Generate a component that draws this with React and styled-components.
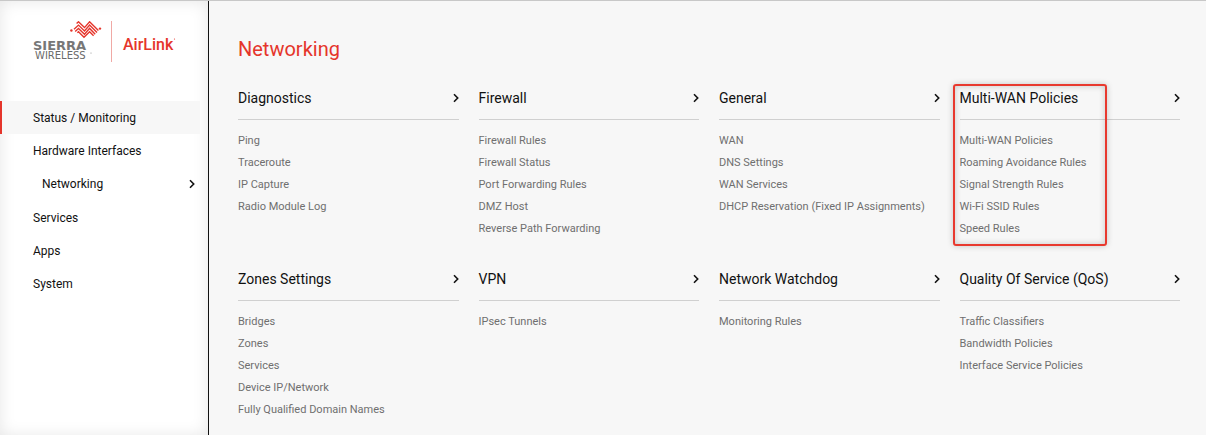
import React from 'react';
import styled, { createGlobalStyle } from 'styled-components';

const navItems = [
    { label: 'Status / Monitoring', active: true },
    { label: 'Hardware Interfaces' },
    { label: 'Networking', child: true },
    { label: 'Services' },
    { label: 'Apps' },
    { label: 'System' },
];

const sections = [
    { title: 'Diagnostics', links: ['Ping', 'Traceroute', 'IP Capture', 'Radio Module Log'] },
    {
        title: 'Firewall',
        links: ['Firewall Rules', 'Firewall Status', 'Port Forwarding Rules', 'DMZ Host', 'Reverse Path Forwarding'],
    },
    { title: 'General', links: ['WAN', 'DNS Settings', 'WAN Services', 'DHCP Reservation (Fixed IP Assignments)'] },
    {
        title: 'Multi-WAN Policies',
        links: ['Multi-WAN Policies', 'Roaming Avoidance Rules', 'Signal Strength Rules', 'Wi-Fi SSID Rules', 'Speed Rules'],
        highlighted: true,
    },
    { title: 'Zones Settings', links: ['Bridges', 'Zones', 'Services', 'Device IP/Network', 'Fully Qualified Domain Names'] },
    { title: 'VPN', links: ['IPsec Tunnels'] },
    { title: 'Network Watchdog', links: ['Monitoring Rules'] },
    { title: 'Quality Of Service (QoS)', links: ['Traffic Classifiers', 'Bandwidth Policies', 'Interface Service Policies'] },
];

const Chevron = ({ size = 10 }) => (
    <svg width={size * 0.6} height={size} viewBox="0 0 6 10" fill="none" stroke="#111" strokeWidth="1.6" aria-hidden="true">
        <path d="M1 1.3 L4.7 5 L1 8.7" />
    </svg>
);

const Logo = () => (
    <svg width="144" height="42" viewBox="0 0 144 42" role="img" aria-label="Sierra Wireless AirLink">
        <g fill="none" stroke="#e5352b" strokeWidth="1.4">
            <path d="M43.6 2.6 L45.5 0.8 L51.5 6.6 L56.6 0.8 L65.4 9.6" />
            <path d="M41 8.2 L45.5 4.1 L51.5 9.9 L56.6 4.1 L64 11.5" />
            <path d="M42.2 10.4 L45.5 7.4 L51.5 13.2 L56.6 7.4 L62.2 13.2" />
            <path d="M44.4 11.8 L45.5 10.7 L51 16.2 L56.6 10.7 L60.6 14.7" />
        </g>
        <g fill="#e5352b">
            <circle cx="38.4" cy="9.5" r="1.2" />
            <circle cx="67" cy="7.6" r="1.2" />
        </g>
        <text x="0" y="29" fontFamily="DejaVu Sans" fontWeight="700" fontSize="13" fill="#777">SIERRA</text>
        <text x="2" y="38" fontFamily="DejaVu Sans" fontSize="10" fill="#6a6a6a">WIRELESS</text>
        <circle cx="58" cy="32" r="0.5" fill="#777" />
        <path d="M78.5 0 V41" stroke="#f0a9a5" />
        <text x="90" y="29" fontFamily="Roboto" fontWeight="500" fontSize="16" fill="#e5352b">AirLink</text>
        <circle cx="141.5" cy="18" r="0.6" fill="#e5352b" />
    </svg>
);

export default function App() {
    return (
        <>
            <GlobalStyle />
            <Page>
                <Sidebar>
                    <LogoLink href="#home">
                        <Logo />
                    </LogoLink>
                    <nav>
                        {navItems.map((item) => (
                            <NavItem key={item.label} href="#nav" $active={item.active} $child={item.child}>
                                {item.label}
                                {item.child && <Chevron />}
                            </NavItem>
                        ))}
                    </nav>
                </Sidebar>
                <Main>
                    <Title>Networking</Title>
                    <Grid>
                        {sections.map((section) => (
                            <Section key={section.title}>
                                <SectionHeading>
                                    <SectionLink href="#section">
                                        {section.title}
                                        <Chevron />
                                    </SectionLink>
                                </SectionHeading>
                                <LinkList>
                                    {section.links.map((link) => (
                                        <li key={link}>
                                            <ItemLink href="#item">{link}</ItemLink>
                                        </li>
                                    ))}
                                </LinkList>
                                {section.highlighted && <Highlight />}
                            </Section>
                        ))}
                    </Grid>
                </Main>
            </Page>
        </>
    );
}

const GlobalStyle = createGlobalStyle`
    *{
        box-sizing: border-box;
    }
    body{
        margin: 0;
        background: #f7f7f7;
        font-family: Roboto, sans-serif;
        color: #111;
    }
    a{
        color: inherit;
        text-decoration: none;
    }
`;
const Page = styled.div`
    display: flex;
    min-height: 100vh;
    border-top: 1px solid #c8c8c8;
`;
const Sidebar = styled.aside`
    flex: 0 0 209px;
    background: #fff;
    border-right: 1px solid #111;
    box-shadow: inset 0 0 16px rgba(0, 0, 0, 0.1);
`;
const LogoLink = styled.a`
    display: flex;
    padding: 20px 0 38px 33px;
`;
const NavItem = styled.a`
    display: flex;
    align-items: center;
    justify-content: space-between;
    height: ${(props) => (props.$child ? 34 : 33)}px;
    padding: 0 13px 0 ${(props) => (props.$child ? 40 : 31)}px;
    border-left: 2px solid transparent;
    font-size: 12px;

    ${(props) => props.$active && `
        margin-right: 8px;
        border-left-color: #e5352b;
        background: #f7f7f7;
    `}
`;
const Main = styled.main`
    flex: 1;
    min-width: 0;
    padding: 33px 26px 15px 29px;
`;
const Title = styled.h1`
    margin: 0 0 16px;
    font-size: 20px;
    font-weight: 400;
    line-height: 30px;
    color: #e5352b;
`;
const Grid = styled.div`
    display: grid;
    grid-template-columns: repeat(4, minmax(0, 1fr));
    gap: 21px 20px;
`;
const Section = styled.section`
    position: relative;
`;
const SectionHeading = styled.h2`
    margin: 0 0 10px;
    padding-bottom: 3px;
    border-bottom: 1px solid #d0d0d0;
    font-size: 14px;
    font-weight: 400;
    line-height: 36px;
`;
const SectionLink = styled.a`
    display: flex;
    align-items: center;
    justify-content: space-between;
`;
const LinkList = styled.ul`
    margin: 0;
    padding: 0;
    list-style: none;
    font-size: 11px;
    line-height: 22px;
    color: #6f6f6f;
`;
const ItemLink = styled.a`
    display: block;
    white-space: nowrap;
`;
const Highlight = styled.div`
    position: absolute;
    top: 4px;
    bottom: -6px;
    left: -7px;
    width: 154px;
    border: 2px solid #e8392f;
    border-radius: 3px;
    box-shadow: 0 0 6px rgba(0, 0, 0, 0.2), inset 0 0 6px rgba(0, 0, 0, 0.2);
    pointer-events: none;
`;
